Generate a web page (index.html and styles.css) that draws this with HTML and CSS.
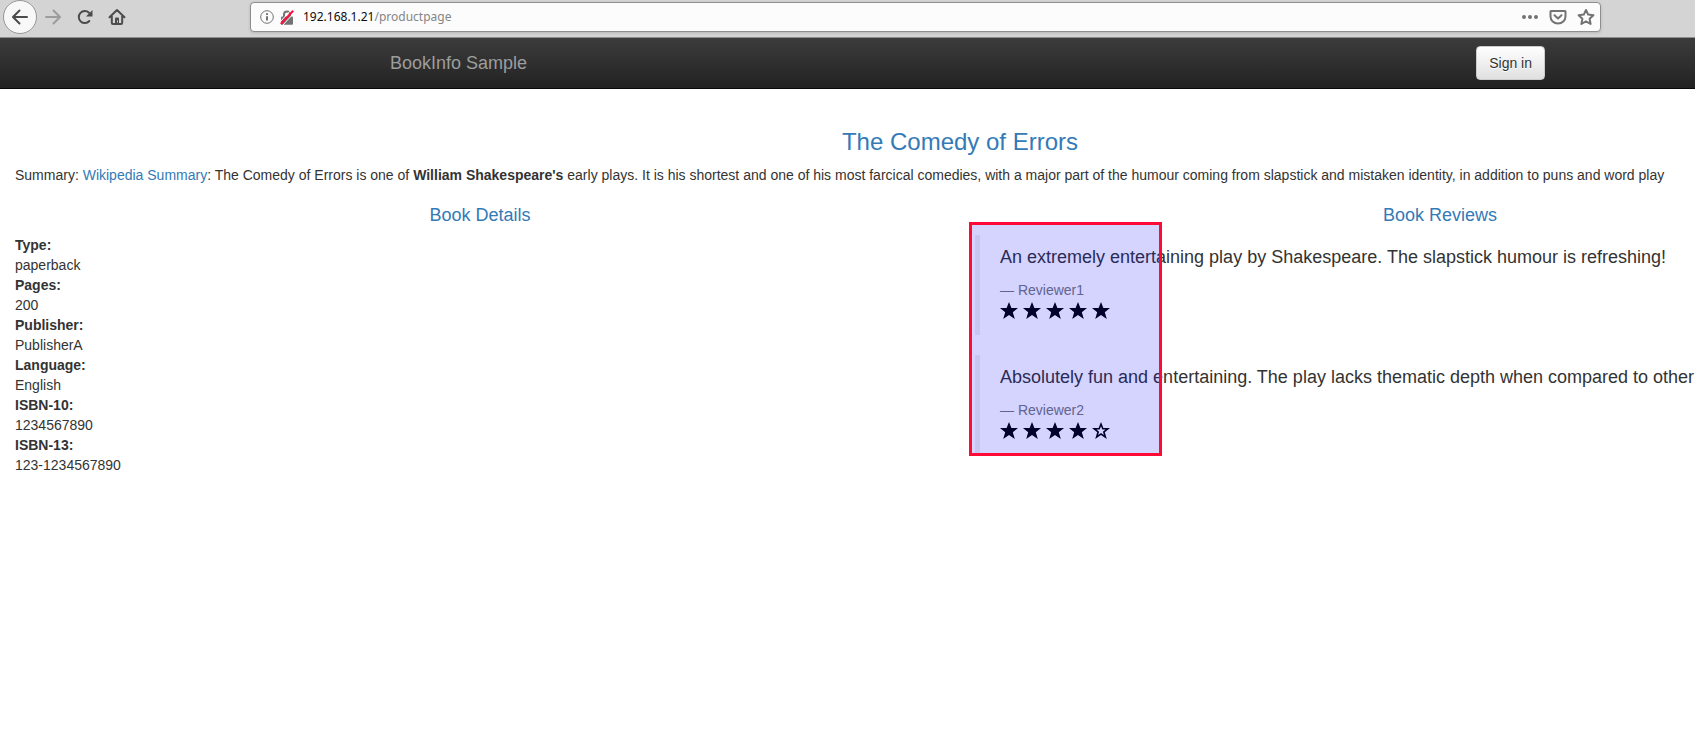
FILE: index.html
```html
<!DOCTYPE html>
<html lang="en">
<head>
<meta charset="utf-8">
<title>Simple Bookstore App</title>
<link rel="stylesheet" href="styles.css">
</head>
<body>
<svg class="defs" width="0" height="0" aria-hidden="true">
  <symbol id="star" viewBox="0 0 18 17"><path d="M9 0l2.400 6H18l-5.200 4.200 2 6.800L9 13l-5.800 4 2-6.800L0 6h6.600z"/></symbol>
  <symbol id="star-empty" viewBox="0 0 18 17"><path fill-rule="evenodd" d="M9 0l2.400 6H18l-5.200 4.200 2 6.800L9 13l-5.800 4 2-6.800L0 6h6.600zM9 4.200L7.700 7.600H4.500l2.600 2.100-1 3.300L9 11l2.900 2-1-3.300 2.600-2.100h-3.200z"/></symbol>
</svg>
<header class="toolbar">
  <button class="tool back" type="button" aria-label="Back"><svg width="18" height="18" viewBox="0 0 18 18"><path d="M16 9H2.500M8.500 2.500L2 9l6.500 6.500"/></svg></button>
  <button class="tool forward" type="button" aria-label="Forward"><svg width="18" height="18" viewBox="0 0 18 18"><path d="M2 9h13.500M9.500 2.500L16 9l-6.500 6.500"/></svg></button>
  <button class="tool" type="button" aria-label="Reload"><svg width="18" height="18" viewBox="0 0 18 18"><path d="M13.300 13a6 6 0 1 1-.3-8.300"/><path class="solid" d="M16.500 2v6.500H10z"/></svg></button>
  <button class="tool" type="button" aria-label="Home"><svg width="18" height="18" viewBox="0 0 18 18"><path d="M1.500 9.200L9 2l7.500 7.200M3.800 8v6.800q0 1.200 1.200 1.200h8q1.200 0 1.200-1.200V8"/><path class="solid" d="M7 16v-5.500q0-1 1-1h2q1 0 1 1V16z"/><path class="knob" d="M9.500 12.500v2"/></svg></button>
  <div class="urlbar">
    <svg class="info" width="14" height="14" viewBox="0 0 14 14"><circle cx="7" cy="7" r="6.300"/><path d="M7 6.200v4.300M7 3.200v1.800"/></svg>
    <svg class="lock" width="14" height="15" viewBox="0 0 14 15"><path class="shackle" d="M4 7V4.500a3 3 0 0 1 6 0V7"/><path class="body" d="M2 6.500h10q1 0 1 1V14q0 .7-1 .7H2q-1 0-1-.7V7.500q0-1 1-1z"/><path class="gap" d="M0 12L11.500-.5M2.500 15.500L14 3"/><path class="slash" d="M.8 14L13.200.8"/></svg>
    <label class="host" for="url">192.168.1.21</label>
    <input class="path" id="url" type="text" value="/productpage">
    <button class="action" type="button" aria-label="Page actions"><svg width="18" height="18" viewBox="0 0 18 18"><g class="dots"><circle cx="3" cy="9" r="2"/><circle cx="9" cy="9" r="2"/><circle cx="15" cy="9" r="2"/></g></svg></button>
    <button class="action" type="button" aria-label="Save to Pocket"><svg width="18" height="18" viewBox="0 0 18 18"><path d="M2 3h14q.5 0 .5.500V8.500a7.500 7 0 0 1-15 0V3.500q0-.5.5-.5zM5.500 7.300L9 10.600l3.500-3.300"/></svg></button>
    <button class="action" type="button" aria-label="Bookmark"><svg width="18" height="18" viewBox="0 0 18 18"><path d="M9 2l2.200 4.600 5.200.7-3.800 3.500 1 5.200L9 13.400 4.400 16l1-5.200L1.600 7.300l5.200-.7z"/></svg></button>
  </div>
</header>
<div class="viewport">
<div class="page">
  <nav class="navbar">
    <div class="container">
      <a class="brand" href="#">BookInfo Sample</a>
      <button class="signin" type="button">Sign in</button>
    </div>
  </nav>
  <main>
    <section class="intro">
      <h3 class="title">The Comedy of Errors</h3>
      <p class="summary">Summary: <a href="#">Wikipedia Summary</a>: The Comedy of Errors is one of <b>William Shakespeare's</b> early plays. It is his shortest and one of his most farcical comedies, with a major part of the humour coming from slapstick and mistaken identity, in addition to puns and word play</p>
    </section>
    <div class="row">
      <section class="col">
        <h4 class="subtitle">Book Details</h4>
        <dl class="details">
          <dt>Type:</dt><dd>paperback</dd>
          <dt>Pages:</dt><dd>200</dd>
          <dt>Publisher:</dt><dd>PublisherA</dd>
          <dt>Language:</dt><dd>English</dd>
          <dt>ISBN-10:</dt><dd>1234567890</dd>
          <dt>ISBN-13:</dt><dd>123-1234567890</dd>
        </dl>
      </section>
      <section class="col">
        <h4 class="subtitle">Book Reviews</h4>
        <div class="reviews">
          <blockquote class="review">
            <p>An extremely entertaining play by Shakespeare. The slapstick humour is refreshing!</p>
            <small>— Reviewer1</small>
            <div class="stars" role="img" aria-label="5 stars"><svg><use href="#star"/></svg><svg><use href="#star"/></svg><svg><use href="#star"/></svg><svg><use href="#star"/></svg><svg><use href="#star"/></svg></div>
          </blockquote>
          <blockquote class="review">
            <p>Absolutely fun and entertaining. The play lacks thematic depth when compared to other</p>
            <small>— Reviewer2</small>
            <div class="stars" role="img" aria-label="4 stars"><svg><use href="#star"/></svg><svg><use href="#star"/></svg><svg><use href="#star"/></svg><svg><use href="#star"/></svg><svg><use href="#star-empty"/></svg></div>
          </blockquote>
          <div class="highlight"></div>
        </div>
      </section>
    </div>
  </main>
</div>
</div>
</body>
</html>
```
FILE: styles.css
```css
* { box-sizing: border-box; }
body {
  margin: 0;
  background: #fff;
  color: #333;
  font: 14px/20px "Liberation Sans", Arial, sans-serif;
}
a { color: #337ab7; text-decoration: none; }
button { font: inherit; margin: 0; padding: 0; border: 0; background: none; }
.defs { position: absolute; }

/* Browser toolbar */
.toolbar {
  display: flex;
  align-items: center;
  height: 38px;
  padding: 0 94px 3px 3px;
  background: #d4d4d4;
  border-bottom: 1px solid #8c8c8c;
}
.tool {
  display: flex;
  align-items: center;
  justify-content: center;
  width: 32px;
  height: 32px;
}
.tool svg { fill: none; stroke: #4c4c4c; stroke-width: 2; stroke-linejoin: round; stroke-linecap: round; }
.tool .solid { fill: #4c4c4c; stroke: none; }
.tool .knob { stroke: #d4d4d4; stroke-width: 1; stroke-linecap: butt; }
.back {
  width: 34px;
  height: 34px;
  border: 1px solid #979797;
  border-radius: 50%;
  background: #f8f8f8;
}
.tool.forward svg { stroke: #9c9c9c; }
.urlbar {
  display: flex;
  align-items: center;
  flex: 1;
  height: 30px;
  margin-left: 117px;
  padding: 0 0 0 9px;
  background: #fcfcfc;
  border: 1px solid #8e8e8e;
  border-radius: 4px;
  box-shadow: 0 1px 3px rgba(0, 0, 0, .15);
}
.info { fill: none; stroke: #737373; stroke-width: 1; }
.info path { stroke-width: 2; }
.lock { margin: 0 9px 0 6px; fill: none; }
.lock .shackle { stroke: #737373; stroke-width: 2; }
.lock .body { fill: #737373; }
.lock .gap { stroke: #fcfcfc; stroke-width: 1; }
.lock .slash { stroke: #ff0f3f; stroke-width: 2; }
.host, .path { font: 12px/16px "Noto Sans", sans-serif; color: #0c0c0d; }
.path {
  flex: 1;
  min-width: 0;
  padding: 0;
  border: 0;
  background: none;
  color: #858585;
}
.action { display: flex; align-items: center; justify-content: center; width: 28px; height: 28px; }
.action svg { fill: none; stroke: #737373; stroke-width: 2; stroke-linejoin: round; stroke-linecap: round; }
.action .dots { fill: #737373; stroke: none; }

/* Book page */
.viewport { overflow-x: hidden; }
.page { min-width: 1920px; }
.navbar {
  background: linear-gradient(#3c3c3c, #222);
  border-bottom: 1px solid #080808;
}
.container {
  display: flex;
  align-items: center;
  justify-content: space-between;
  max-width: 1170px;
  min-height: 50px;
  margin: 0 auto;
  padding-left: 15px;
}
.brand { color: #9d9d9d; font-size: 18px; }
.signin {
  padding: 6px 12px;
  border: 1px solid #ccc;
  border-radius: 4px;
  background: linear-gradient(#fff, #e0e0e0);
  color: #333;
  text-shadow: 0 1px 0 #fff;
}
.intro { padding: 40px 15px 0; }
.title {
  margin: 0 0 10px;
  color: #337ab7;
  font-size: 24px;
  line-height: 26px;
  font-weight: 400;
  text-align: center;
}
.summary { margin: 0 0 10px; white-space: nowrap; }
.row { display: grid; grid-template-columns: 1fr 1fr; }
.col { padding: 0 15px; }
.subtitle {
  margin: 10px 0;
  color: #337ab7;
  font-size: 18px;
  line-height: 20px;
  font-weight: 400;
  text-align: center;
}
.details { margin: 0 0 20px; }
.details dt { font-weight: 700; }
.details dd { margin: 0; }
.reviews { position: relative; }
.review {
  margin: 0 0 20px;
  padding: 10px 20px;
  border-left: 5px solid #eee;
}
.review p { margin: 0 0 10px; font-size: 18px; line-height: 25px; white-space: nowrap; }
.review small { display: block; color: #777; font-size: 14px; }
.stars { display: flex; gap: 5px; height: 25px; padding-top: 2px; }
.stars svg { width: 18px; height: 17px; fill: #000; }
.highlight {
  position: absolute;
  top: -13px;
  left: -6px;
  width: 193px;
  height: 234px;
  border: 3px solid #ff0a36;
  background: rgba(0, 0, 255, .17);
  background-clip: padding-box;
}
```
